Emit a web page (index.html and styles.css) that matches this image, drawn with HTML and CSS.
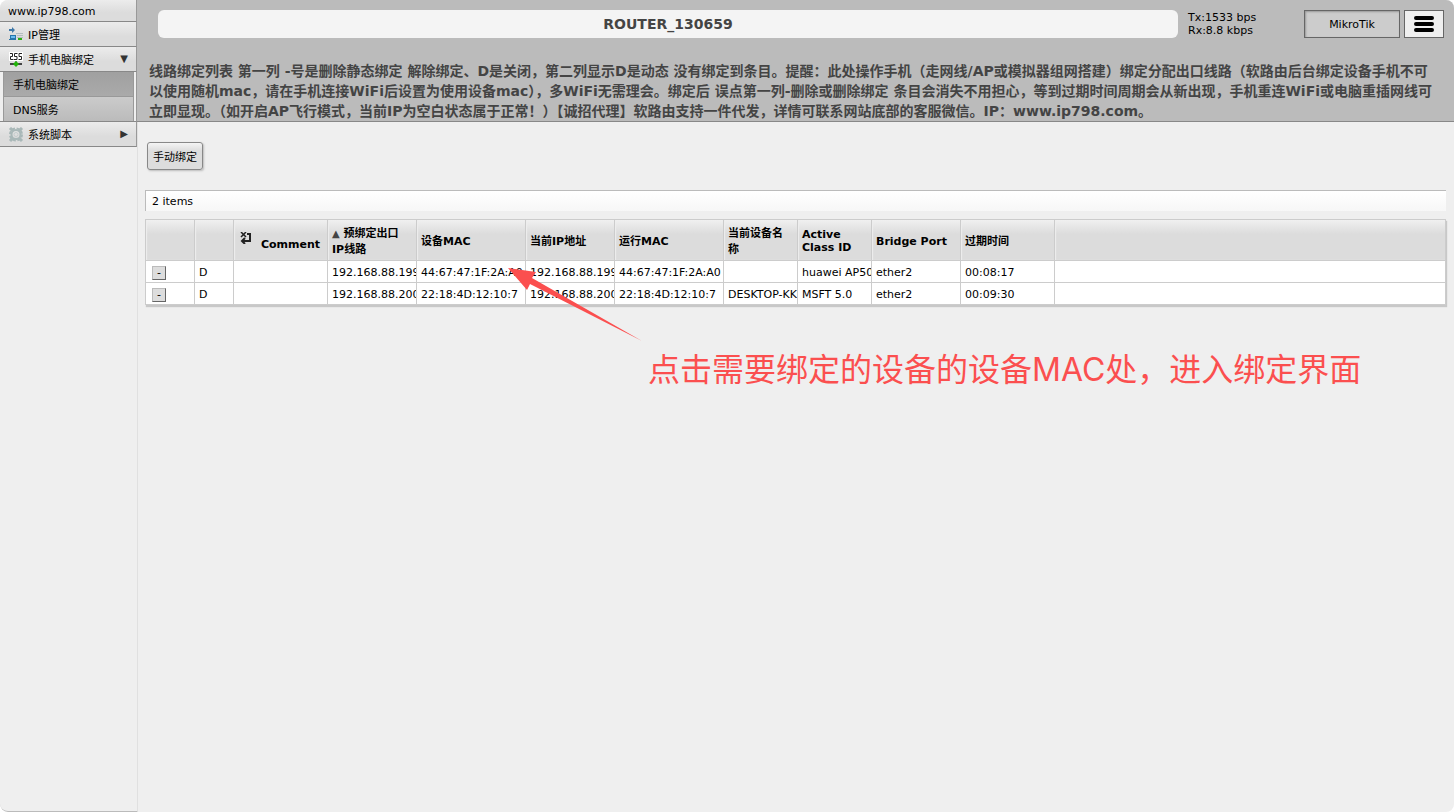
FILE: index.html
```html
<!DOCTYPE html>
<html lang="zh-CN">
<head>
<meta charset="utf-8">
<title>ROUTER_130659</title>
<link rel="stylesheet" href="styles.css">
</head>
<body>
<div class="app">
  <nav class="sidebar">
    <a class="site" href="#">www.ip798.com</a>
    <a class="item" href="#">
      <svg class="icon" width="16" height="16" viewBox="0 0 16 16"><path d="M1 2h3V0l3 3-3 3V4H1z" fill="#3f78a8"/><rect x="2.500" y="8.500" width="5" height="3" fill="#6bbcf0" stroke="#2775aa"/><path d="M1 12.500h7" stroke="#2775aa"/><path d="M8 6.500h7M9 8.500h6M9 10.500h6" stroke="#b4bcc0"/><path d="M10 11h4v2h-4z" fill="#2cae12"/></svg>
      <span>IP管理</span>
    </a>
    <a class="item" href="#">
      <svg class="icon" width="16" height="16" viewBox="0 0 16 16"><path d="M1 0h14v9H1z" fill="#fff"/><path d="M2 1.500h2.500v3H2.500v3h3M9.500 1.500h-3V4.500H9v3H6M14 1.500h-3V4.500h2.500v3h-3" fill="none" stroke="#222"/><path d="M8 9v2" stroke="#444"/><path d="M2 12h12" stroke="#444" stroke-width="2"/><path d="M5 12l3-3 3 3-3 3z" fill="#21b409"/></svg>
      <span>手机电脑绑定</span><span class="caret">▼</span>
    </a>
    <div class="submenu">
      <a class="subitem current" href="#">手机电脑绑定</a>
      <a class="subitem" href="#">DNS服务</a>
    </div>
    <a class="item" href="#">
      <svg class="icon" width="16" height="16" viewBox="0 0 16 16" fill="none" stroke="#a9b8b8"><circle cx="8" cy="7.500" r="6" stroke-width="2" stroke-dasharray="3 1.700"/><circle cx="8" cy="7.500" r="4.500" stroke-width="2"/><circle cx="8" cy="7.500" r="2" stroke="#c4cdcd"/><path d="M2 1l3 3M14 1l-3 3M2 14l3-3M14 14l-3-3" stroke-width="3"/></svg>
      <span>系统脚本</span><span class="caret">▶</span>
    </a>
  </nav>

  <div class="page">
    <header class="header">
      <div class="topbar">
        <h1 class="title">ROUTER_130659</h1>
        <div class="traffic">Tx:1533 bps<br>Rx:8.8 kbps</div>
        <button class="brand" type="button">MikroTik</button>
        <button class="menu" type="button" aria-label="菜单"><svg width="20" height="18" viewBox="0 0 20 18"><path d="M2 3h16M2 9h16M2 15h16" stroke="#000" stroke-width="4" stroke-linecap="round"/></svg></button>
      </div>
      <p class="notice">线路绑定列表 第一列 -号是删除静态绑定 解除绑定、D是关闭，第二列显示D是动态 没有绑定到条目。提醒：此处操作手机（走网线/AP或模拟器组网搭建）绑定分配出口线路（软路由后台绑定设备手机不可<br>以使用随机mac，请在手机连接WiFi后设置为使用设备mac），多WiFi无需理会。绑定后 误点第一列-删除或删除绑定 条目会消失不用担心，等到过期时间周期会从新出现，手机重连WiFi或电脑重插网线可<br>立即显现。（如开启AP飞行模式，当前IP为空白状态属于正常！）【诚招代理】软路由支持一件代发，详情可联系网站底部的客服微信。IP：www.ip798.com。</p>
    </header>

    <main class="content">
      <button class="bind" type="button">手动绑定</button>
      <div class="count">2 items</div>
      <table class="leases">
        <colgroup><col class="w49"><col class="w39"><col class="w94"><col class="w89"><col class="w109"><col class="w89"><col class="w109"><col class="w74"><col class="w74"><col class="w89"><col class="w94"><col></colgroup>
        <thead>
          <tr>
            <th></th><th></th>
            <th><div class="comment"><svg width="12" height="12" viewBox="0 0 12 12" fill="none" stroke="#222" stroke-width="2"><path d="M1 0l5 5M6 0L1 5" stroke-width="1.500"/><path d="M7 2h3v7H3M5 6L2 9l3 3"/></svg><span>Comment</span></div></th>
            <th class="tall"><span class="sort">▲</span> 预绑定出口<br>IP线路</th>
            <th>设备MAC</th><th>当前IP地址</th><th>运行MAC</th><th class="tall">当前设备名称</th><th>Active Class ID</th><th>Bridge Port</th><th>过期时间</th><th></th>
          </tr>
        </thead>
        <tbody>
          <tr><td><button class="remove" type="button">-</button></td><td>D</td><td></td><td>192.168.88.199</td><td>44:67:47:1F:2A:A0</td><td>192.168.88.199</td><td>44:67:47:1F:2A:A0</td><td></td><td>huawei AP50</td><td>ether2</td><td>00:08:17</td><td></td></tr>
          <tr><td><button class="remove" type="button">-</button></td><td>D</td><td></td><td>192.168.88.200</td><td>22:18:4D:12:10:7</td><td>192.168.88.200</td><td>22:18:4D:12:10:7</td><td>DESKTOP-KK</td><td>MSFT 5.0</td><td>ether2</td><td>00:09:30</td><td></td></tr>
        </tbody>
      </table>
    </main>
  </div>

  <svg class="arrow" width="134" height="74" viewBox="0 0 134 74"><path d="M0 0L28 4l-4 6L134 73 22 16l-3 6z" fill="#fb4f4f"/></svg>
  <div class="hint">点击需要绑定的设备的设备MAC处，进入绑定界面</div>
</div>
</body>
</html>
```
FILE: styles.css
```css
* { box-sizing: border-box; }

body {
  margin: 0;
  background: #fff;
  color: #000;
  font: 11px/13px "DejaVu Sans", "Noto Sans CJK SC", sans-serif;
}

a { color: inherit; text-decoration: none; }

button {
  font: inherit;
  color: inherit;
  padding: 0;
}

.app {
  position: relative;
  display: flex;
  min-height: 100vh;
  background: #efefef;
  border-radius: 8px;
  overflow: hidden;
}

.sidebar {
  flex: none;
  width: 138px;
  border-right: 1px solid #e0e0e0;
  border-bottom: 1px solid #bbb;
  border-bottom-left-radius: 8px;
}

.site,
.item {
  display: flex;
  align-items: center;
  border-right: 1px solid #999;
  border-bottom: 1px solid #888;
  background: linear-gradient(#ececec, #dcdcdc 60%);
}

.site { height: 22px; padding: 1px 0 0 8px; }

.item { height: 25px; padding: 2px 8px 0; gap: 4px; }

.icon { flex: none; }

.caret { margin: 0 0 4px auto; color: #333; font-size: 10px; }

.submenu {
  padding: 0 2px 0 3px;
  border-right: 1px solid #999;
  border-bottom: 1px solid #888;
  background: #efefef;
}

.subitem {
  display: flex;
  align-items: center;
  height: 25px;
  padding: 2px 0 0 9px;
  border: 1px solid #999;
  border-top: 0;
  background: linear-gradient(#cbcbcb, #bbb);
}

.subitem:last-child { height: 24px; border-bottom: 0; }

.current { background: linear-gradient(#a0a0a0, #aaa); }

.page { flex: 1; min-width: 0; }

.header {
  height: 122px;
  margin-left: -1px;
  padding: 10px 10px 0 12px;
  background: #bbb;
  border-bottom: 1px solid #888;
}

.topbar { display: flex; height: 28px; padding-left: 9px; }

.title {
  flex: 1;
  margin: 0;
  border-radius: 6px;
  background: #f4f4f4;
  color: #444;
  font-size: 14px;
  line-height: 28px;
  text-align: center;
}

.traffic { width: 126px; padding: 1px 0 0 10px; }

.brand {
  width: 96px;
  margin-right: 4px;
  border: 1px solid #666;
  background: #ccc;
  box-shadow: inset 1px 1px 2px #999;
}

.menu {
  display: flex;
  align-items: center;
  justify-content: center;
  width: 40px;
  border: 1px solid #666;
  background: #efefef;
}

.notice {
  margin: 23px 0 0;
  color: #444;
  font-size: 14px;
  font-weight: bold;
  line-height: 20px;
  white-space: nowrap;
}

.content { padding: 20px 8px 20px 7px; }

.bind {
  display: block;
  width: 56px;
  height: 28px;
  margin-left: 2px;
  padding-top: 2px;
  border: 1px solid #888;
  border-radius: 3px;
  background: linear-gradient(#f4f4f4, #ddd 30%);
  box-shadow: 1px 1px 2px #bbb;
}

.count {
  margin: 20px 0 8px;
  padding: 4px 6px 3px;
  border: solid #bbb;
  border-width: 1px 0 0 1px;
  background: linear-gradient(#fff, #f7f7f7);
  line-height: 13px;
}

.leases {
  width: 100%;
  table-layout: fixed;
  border-collapse: separate;
  border-spacing: 0;
  border: solid #ccc;
  border-width: 1px 0 0 1px;
  background: #fff;
  box-shadow: 1px 2px 1px #c8c8c8;
}

.w39 { width: 39px; }
.w49 { width: 49px; }
.w74 { width: 74px; }
.w89 { width: 89px; }
.w94 { width: 94px; }
.w109 { width: 109px; }

.leases th,
.leases td {
  padding: 2px 4px 0;
  border: solid #ccc;
  border-width: 0 1px 1px 0;
  text-align: left;
  overflow: hidden;
}

.leases th {
  height: 41px;
  background: linear-gradient(#f0f0f0, #dcdcdc 35%);
  box-shadow: inset 1px 0 1px #eee;
}

.leases td {
  height: 22px;
  padding-right: 0;
  white-space: nowrap;
}

.leases .tall { padding-top: 4px; line-height: 16px; }

.sort { color: #444; font-size: 10px; font-weight: normal; }

.comment {
  display: flex;
  justify-content: space-between;
  padding: 0 3px 0 2px;
}

.comment span { padding-top: 6px; }

.remove {
  display: block;
  width: 14px;
  height: 14px;
  margin-left: 2px;
  border: 1px solid;
  border-color: #bbb #666 #666 #bbb;
  background: #ddd;
  line-height: 12px;
}

.arrow { position: absolute; left: 508px; top: 268px; }

.hint {
  position: absolute;
  left: 648px;
  top: 349px;
  color: #fb4f4f;
  font: 32px/42px Inter, "Noto Sans CJK SC", sans-serif;
  white-space: nowrap;
}
```
